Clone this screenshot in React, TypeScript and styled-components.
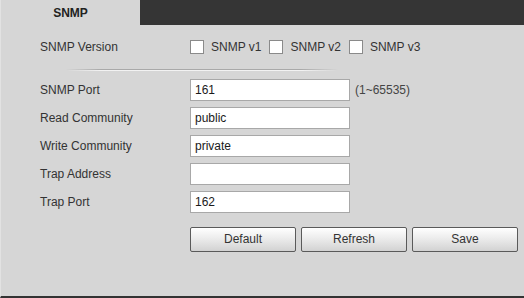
import React from "react";
import styled, { createGlobalStyle } from "styled-components";

const Global = createGlobalStyle`
  html, body { margin: 0; padding: 0; background: #d6d6d6; }
  body { font-family: "Liberation Sans", Arial, sans-serif; font-size: 12px; color: #333; }
`;

const Page = styled.div`
  width: 524px;
  height: 298px;
  background: #d6d6d6;
  display: flex;
  flex-direction: column;
  box-sizing: border-box;
  border-bottom: 2px solid #333;
  border-left: 1px solid #e2e2e2;
  overflow: hidden;
`;

const TabBar = styled.div`
  display: flex;
  height: 25px;
  background: #353535;
`;

const Tab = styled.div`
  width: 139px;
  height: 26px;
  background: #d6d6d6;
  display: flex;
  align-items: center;
  justify-content: center;
  font-weight: bold;
  font-size: 12px;
  color: #222;
`;

const Body = styled.div`
  display: flex;
  flex-direction: column;
  padding: 0 0 0 39px;
`;

const Row = styled.div<{ $h: number }>`
  display: flex;
  align-items: center;
  height: ${(p) => p.$h}px;
`;

const Label = styled.div`
  width: 150px;
  color: #333;
`;

const CheckGroup = styled.label`
  display: flex;
  align-items: center;
  margin-right: 8px;
  color: #333;
`;

const Box = styled.span`
  width: 12px;
  height: 12px;
  background: #fff;
  border: 1px solid #8a8a8a;
  margin-right: 7px;
`;

const Divider = styled.div`
  margin: 0 0 8px 26px;
  width: 272px;
  height: 2px;
  background: linear-gradient(to bottom, #a9a9a9 0 1px, #f2f2f2 1px 2px);
  -webkit-mask-image: linear-gradient(to right, transparent 0, #000 35px, #000 235px, transparent 272px);
  mask-image: linear-gradient(to right, transparent 0, #000 35px, #000 235px, transparent 272px);
`;

const Form = styled.div`
  display: flex;
  flex-direction: column;
  gap: 6px;
`;

const Input = styled.div`
  width: 160px;
  height: 22px;
  box-sizing: border-box;
  background: #fff;
  border: 1px solid #a8a8a8;
  padding: 0 4px;
  display: flex;
  align-items: center;
  color: #1a1a1a;
  font-size: 12px;
`;

const Hint = styled.span`
  margin-left: 5px;
  color: #444;
  font-size: 12px;
`;

const Buttons = styled.div`
  display: flex;
  gap: 5px;
  margin: 14px 0 0 150px;
`;

const Button = styled.button`
  width: 106px;
  height: 25px;
  box-sizing: border-box;
  border: 1px solid #5a5a5a;
  border-radius: 2px;
  background: linear-gradient(to bottom, #ffffff 0%, #ececec 45%, #d2d2d2 100%);
  font-family: "Liberation Sans", Arial, sans-serif;
  font-size: 12px;
  color: #333;
  padding: 0 0 2px;
  box-shadow: inset 0 1px 0 #fff;
`;

const fields: { label: string; value: string; hint?: string }[] = [
  { label: "SNMP Port", value: "161", hint: "(1~65535)" },
  { label: "Read Community", value: "public" },
  { label: "Write Community", value: "private" },
  { label: "Trap Address", value: "" },
  { label: "Trap Port", value: "162" },
];

export default function App() {
  return (
    <>
      <Global />
      <Page>
        <TabBar>
          <Tab>SNMP</Tab>
        </TabBar>
        <Body>
          <Row $h={44}>
            <Label>SNMP Version</Label>
            <CheckGroup>
              <Box />
              SNMP v1
            </CheckGroup>
            <CheckGroup>
              <Box />
              SNMP v2
            </CheckGroup>
            <CheckGroup>
              <Box />
              SNMP v3
            </CheckGroup>
          </Row>
          <Divider />
          <Form>
            {fields.map((f) => (
              <Row $h={22} key={f.label}>
                <Label>{f.label}</Label>
                <Input>{f.value}</Input>
                {f.hint && <Hint>{f.hint}</Hint>}
              </Row>
            ))}
          </Form>
          <Buttons>
            <Button>Default</Button>
            <Button>Refresh</Button>
            <Button>Save</Button>
          </Buttons>
        </Body>
      </Page>
    </>
  );
}
